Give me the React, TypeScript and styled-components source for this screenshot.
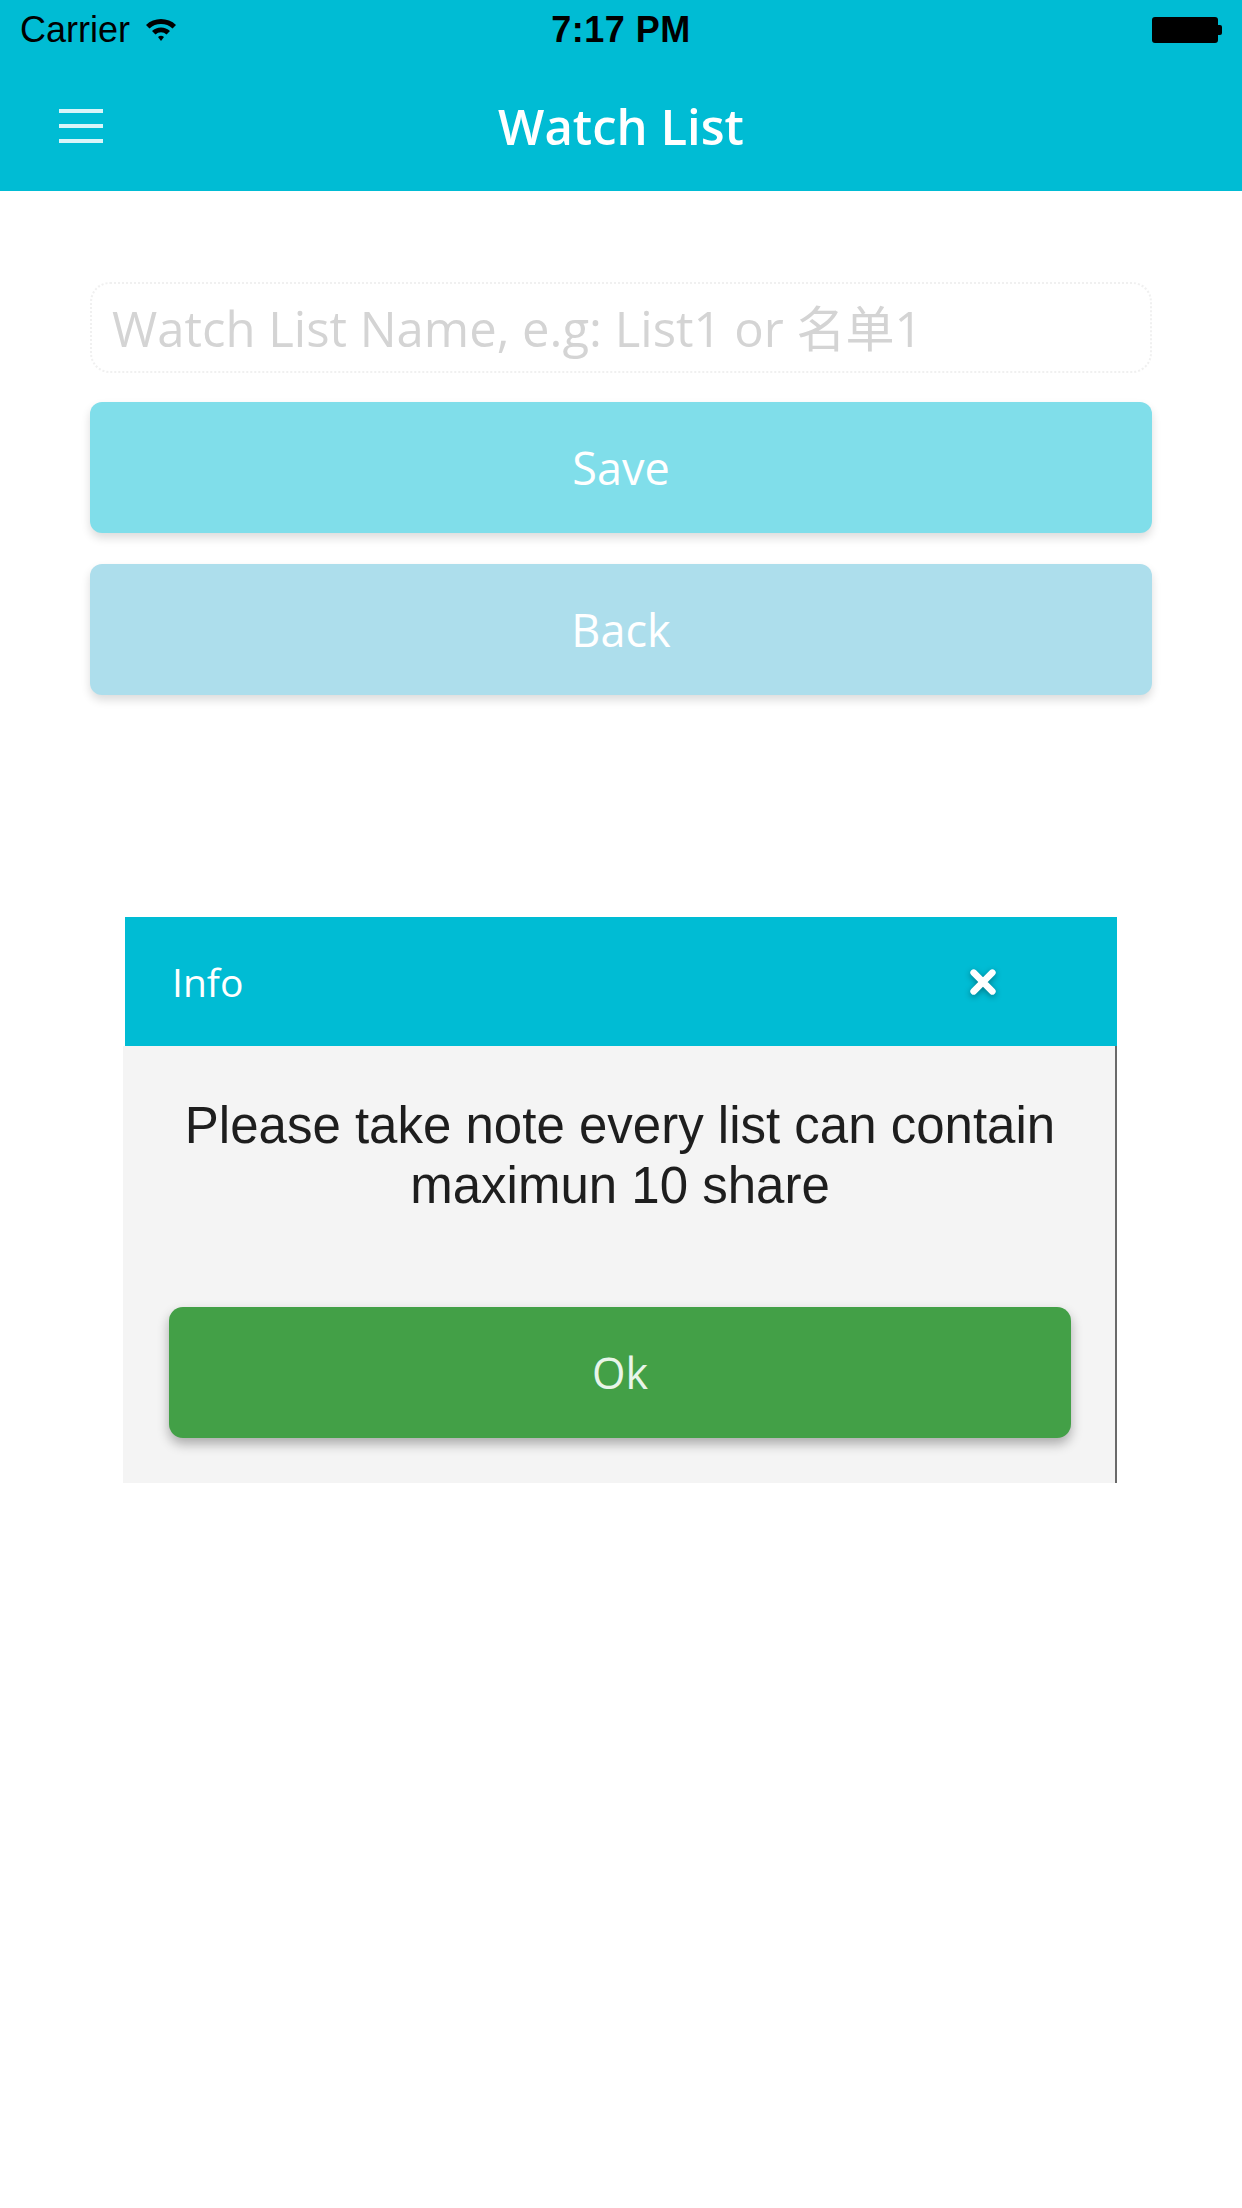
import React from 'react';
import styled, { createGlobalStyle } from 'styled-components';

const GlobalStyle = createGlobalStyle`
  html, body {
    margin: 0;
    padding: 0;
    background: #fff;
  }
  * {
    box-sizing: border-box;
  }
`;

const Screen = styled.div`
  width: 1242px;
  min-height: 2208px;
  background: #fff;
  font-family: 'Liberation Sans', Arial, sans-serif;
`;

const Header = styled.header`
  background-color: #00bcd4;
`;

const StatusBar = styled.div`
  height: 60px;
  padding: 0 20px 0 20px;
  display: grid;
  grid-template-columns: 1fr auto 1fr;
  align-items: center;
  color: #000;
  font-size: 36px;
`;

const Carrier = styled.div`
  display: flex;
  align-items: center;
  gap: 14px;
`;

const Clock = styled.div`
  font-weight: 700;
  letter-spacing: 0.5px;
`;

const Battery = styled.div`
  justify-self: end;
  display: flex;
  align-items: center;
`;

const BatteryBody = styled.div`
  width: 66px;
  height: 26px;
  background: #000;
  border-radius: 3px;
`;

const BatteryTip = styled.div`
  width: 4px;
  height: 10px;
  background: #000;
  border-radius: 0 2px 2px 0;
`;

const NavBar = styled.div`
  height: 131px;
  display: grid;
  grid-template-columns: 160px 1fr 160px;
  align-items: center;
`;

const MenuButton = styled.div`
  padding-left: 59px;
  display: flex;
  flex-direction: column;
  gap: 11px;
`;

const MenuLine = styled.span`
  display: block;
  width: 44px;
  height: 4px;
  background: #d9f5f9;
`;

const Title = styled.h1`
  margin: 0;
  text-align: center;
  color: #fff;
  font-family: 'Open Sans', 'Liberation Sans', sans-serif;
  font-weight: 600;
  font-size: 49px;
`;

const Form = styled.main`
  padding: 91px 90px 0 90px;
  display: flex;
  flex-direction: column;
`;

const NameInput = styled.input`
  height: 91px;
  width: 100%;
  border: 2px dotted #f0f0f0;
  border-radius: 20px;
  padding: 0 20px;
  font-family: 'Open Sans', 'Noto Sans CJK SC', sans-serif;
  font-size: 49px;
  color: #333;
  outline: none;
  background: #fff;

  &::placeholder {
    color: #d4d4d4;
  }
`;

const ActionButton = styled.button<{ $bg: string; $gap: number }>`
  margin-top: ${p => p.$gap}px;
  height: 131px;
  width: 100%;
  border: none;
  border-radius: 12px;
  background: ${p => p.$bg};
  color: #fff;
  font-family: 'Open Sans', 'Liberation Sans', sans-serif;
  font-size: 45px;
  box-shadow: 0 5px 10px rgba(0, 0, 0, 0.14);
`;

const Dialog = styled.section`
  margin: 222px auto 0 auto;
  width: 992px;
`;

const DialogHeader = styled.div`
  height: 129px;
  background: #00bcd4;
  display: flex;
  align-items: center;
  justify-content: space-between;
  padding: 0 118px 0 47px;
  color: #fff;
  font-family: 'Open Sans', 'Liberation Sans', sans-serif;
  font-size: 39px;
`;

const CloseIcon = styled.svg`
  width: 32px;
  height: 32px;
  filter: drop-shadow(0 2px 3px rgba(0, 0, 0, 0.35));
`;

const DialogBody = styled.div`
  background: #f4f4f4;
  border-right: 2px solid #6a6a6a;
  margin-left: -2px;
  padding: 50px 44px 45px 46px;
`;

const Message = styled.p`
  margin: 0 0 91px 0;
  text-align: center;
  color: #1e1e1e;
  font-size: 51px;
  line-height: 60px;
`;

const OkButton = styled.button`
  width: 100%;
  height: 131px;
  border: none;
  border-radius: 14px;
  background: #43a047;
  color: #e8f5e9;
  font-family: 'Open Sans', 'Liberation Sans', sans-serif;
  font-size: 43px;
  box-shadow: 0 6px 12px rgba(0, 0, 0, 0.3);
`;

const WifiIcon = () => (
  <svg width="34" height="28" viewBox="0 0 34 28">
    <path d="M2 9 A22 22 0 0 1 32 9 L28.5 12.5 A17 17 0 0 0 5.5 12.5 Z" fill="#000" />
    <path d="M8 15 A13 13 0 0 1 26 15 L22.5 18.5 A8 8 0 0 0 11.5 18.5 Z" fill="#000" />
    <path d="M14 21 A4.5 4.5 0 0 1 20 21 L17 25 Z" fill="#000" />
  </svg>
);

const App: React.FC = () => {
  return (
    <>
      <GlobalStyle />
      <Screen>
        <Header>
          <StatusBar>
            <Carrier>
              Carrier
              <WifiIcon />
            </Carrier>
            <Clock>7:17 PM</Clock>
            <Battery>
              <BatteryBody />
              <BatteryTip />
            </Battery>
          </StatusBar>
          <NavBar>
            <MenuButton>
              <MenuLine />
              <MenuLine />
              <MenuLine />
            </MenuButton>
            <Title>Watch List</Title>
            <div />
          </NavBar>
        </Header>

        <Form>
          <NameInput placeholder="Watch List Name, e.g: List1 or 名单1" />
          <ActionButton $bg="#80deea" $gap={29}>Save</ActionButton>
          <ActionButton $bg="#addeec" $gap={31}>Back</ActionButton>
        </Form>

        <Dialog>
          <DialogHeader>
            Info
            <CloseIcon viewBox="0 0 24 24">
              <path d="M5 5 L19 19 M19 5 L5 19" stroke="#fff" strokeWidth="5" strokeLinecap="round" />
            </CloseIcon>
          </DialogHeader>
          <DialogBody>
            <Message>
              Please take note every list can contain
              <br />
              maximun 10 share
            </Message>
            <OkButton>Ok</OkButton>
          </DialogBody>
        </Dialog>
      </Screen>
    </>
  );
};

export default App;
